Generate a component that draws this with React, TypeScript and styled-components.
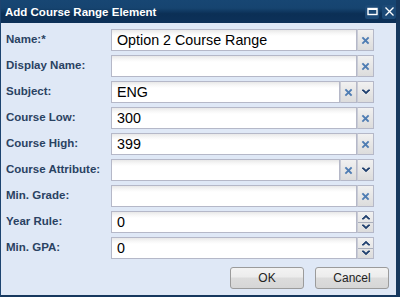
import React from 'react';
import styled, {createGlobalStyle} from 'styled-components';

const Global = createGlobalStyle`
  html, body {
    margin: 0;
    padding: 0;
    background: #ffffff;
  }
  * { box-sizing: border-box; }
`

const Window = styled.div`
  width: 400px;
  height: 297px;
  display: flex;
  flex-direction: column;
  background: #dfe8f6;
  border-left: 1px solid #1d4470;
  border-right: 4px solid #16385e;
  border-bottom: 2px solid #16385e;
  font-family: "Liberation Sans", Arial, sans-serif;
  overflow: hidden;
`

const Header = styled.div`
  height: 23px;
  flex: none;
  display: flex;
  align-items: center;
  padding: 0 4px 0 5px;
  background: linear-gradient(#174673 0%, #164470 35%, #0b2f55 60%, #0d3159 100%);
  margin-left: -1px;
  margin-right: -4px;
`

const Title = styled.div`
  flex: 1;
  color: #ffffff;
  font-weight: bold;
  font-size: 11.5px;
`

const Tool = styled.div`
  width: 14px;
  height: 14px;
  margin-left: 3px;
  display: flex;
  align-items: center;
  justify-content: center;
  background: #1c4a77;
  border-radius: 2px;
`

const Body = styled.div`
  flex: 1;
  display: flex;
  flex-direction: column;
  padding: 6px 0 0 5px;
`

const Form = styled.div`
  display: grid;
  grid-template-columns: 105px 263px;
  row-gap: 4px;
  align-items: center;
`

const Label = styled.div`
  font-size: 11.5px;
  font-weight: bold;
  color: #2a4262;
  padding-bottom: 2px;
`

const Field = styled.div`
  display: flex;
  height: 22px;
`

const Input = styled.div`
  flex: 1;
  height: 22px;
  border: 1px solid #b5b8c8;
  background: linear-gradient(#e8e8e8 0px, #f6f6f6 3px, #ffffff 6px);
  font-size: 14.3px;
  color: #000000;
  padding: 2px 0 0 5px;
  line-height: 17px;
`

const Trigger = styled.div`
  width: 17px;
  height: 22px;
  flex: none;
  border: 1px solid #b5b8c8;
  border-left: 1px solid #c8cbd6;
  background: linear-gradient(#f1f1f1, #dcdcdc);
  display: flex;
  flex-direction: column;
  align-items: center;
  justify-content: center;
`

const SpinHalf = styled.div<{ $top?: boolean }>`
  flex: 1;
  width: 100%;
  display: flex;
  align-items: center;
  justify-content: center;
  border-bottom: ${p => p.$top ? '1px solid #a9aebb' : 'none'};
`

const Footer = styled.div`
  display: flex;
  justify-content: flex-end;
  gap: 11px;
  padding: 8px 7px 0 0;
`

const Button = styled.div`
  width: 74px;
  height: 22px;
  border: 1px solid #9b9b9b;
  border-radius: 3px;
  background: linear-gradient(#f3f3f3 0%, #ececec 45%, #dcdcdc 50%, #d6d6d6 100%);
  display: flex;
  align-items: center;
  justify-content: center;
  font-size: 12px;
  color: #222222;
`

const ClearIcon = () => (
    <svg width="9" height="9" viewBox="0 0 9 9">
        <path d="M2 2 L7 7 M7 2 L2 7" stroke="#4f7db3" strokeWidth="1.8" strokeLinecap="square"/>
    </svg>
);

const DownIcon = () => (
    <svg width="10" height="6" viewBox="0 0 10 6">
        <path d="M1 1 L5 4.8 L9 1 L7.3 1 L5 3.2 L2.7 1 Z" fill="#1d3e6d" stroke="#1d3e6d" strokeWidth="0.8"/>
    </svg>
);

const UpIcon = () => (
    <svg width="10" height="6" viewBox="0 0 10 6">
        <path d="M1 5 L5 1.2 L9 5 L7.3 5 L5 2.8 L2.7 5 Z" fill="#1d3e6d" stroke="#1d3e6d" strokeWidth="0.8"/>
    </svg>
);

type Kind = 'clear' | 'combo' | 'spin';

const rows: { label: string, value: string, kind: Kind }[] = [
    {label: 'Name:*', value: 'Option 2 Course Range', kind: 'clear'},
    {label: 'Display Name:', value: '', kind: 'clear'},
    {label: 'Subject:', value: 'ENG', kind: 'combo'},
    {label: 'Course Low:', value: '300', kind: 'clear'},
    {label: 'Course High:', value: '399', kind: 'clear'},
    {label: 'Course Attribute:', value: '', kind: 'combo'},
    {label: 'Min. Grade:', value: '', kind: 'clear'},
    {label: 'Year Rule:', value: '0', kind: 'spin'},
    {label: 'Min. GPA:', value: '0', kind: 'spin'},
];

export default function App() {
    return (
        <Window>
            <Global/>
            <Header>
                <Title>Add Course Range Element</Title>
                <Tool>
                    <svg width="11" height="9" viewBox="0 0 11 9">
                        <rect x="1" y="1.5" width="9" height="6" fill="none" stroke="#ffffff" strokeWidth="1.4"/>
                        <rect x="1" y="1" width="9" height="2" fill="#ffffff"/>
                    </svg>
                </Tool>
                <Tool>
                    <svg width="11" height="11" viewBox="0 0 11 11">
                        <path d="M1.5 1.5 L9.5 9.5 M9.5 1.5 L1.5 9.5" stroke="#ffffff" strokeWidth="1.3"/>
                    </svg>
                </Tool>
            </Header>
            <Body>
                <Form>
                    {rows.map(row => (
                        <React.Fragment key={row.label}>
                            <Label>{row.label}</Label>
                            <Field>
                                <Input>{row.value}</Input>
                                {row.kind !== 'spin' && <Trigger><ClearIcon/></Trigger>}
                                {row.kind === 'combo' && <Trigger><DownIcon/></Trigger>}
                                {row.kind === 'spin' && (
                                    <Trigger>
                                        <SpinHalf $top><UpIcon/></SpinHalf>
                                        <SpinHalf><DownIcon/></SpinHalf>
                                    </Trigger>
                                )}
                            </Field>
                        </React.Fragment>
                    ))}
                </Form>
                <Footer>
                    <Button>OK</Button>
                    <Button>Cancel</Button>
                </Footer>
            </Body>
        </Window>
    );
}
